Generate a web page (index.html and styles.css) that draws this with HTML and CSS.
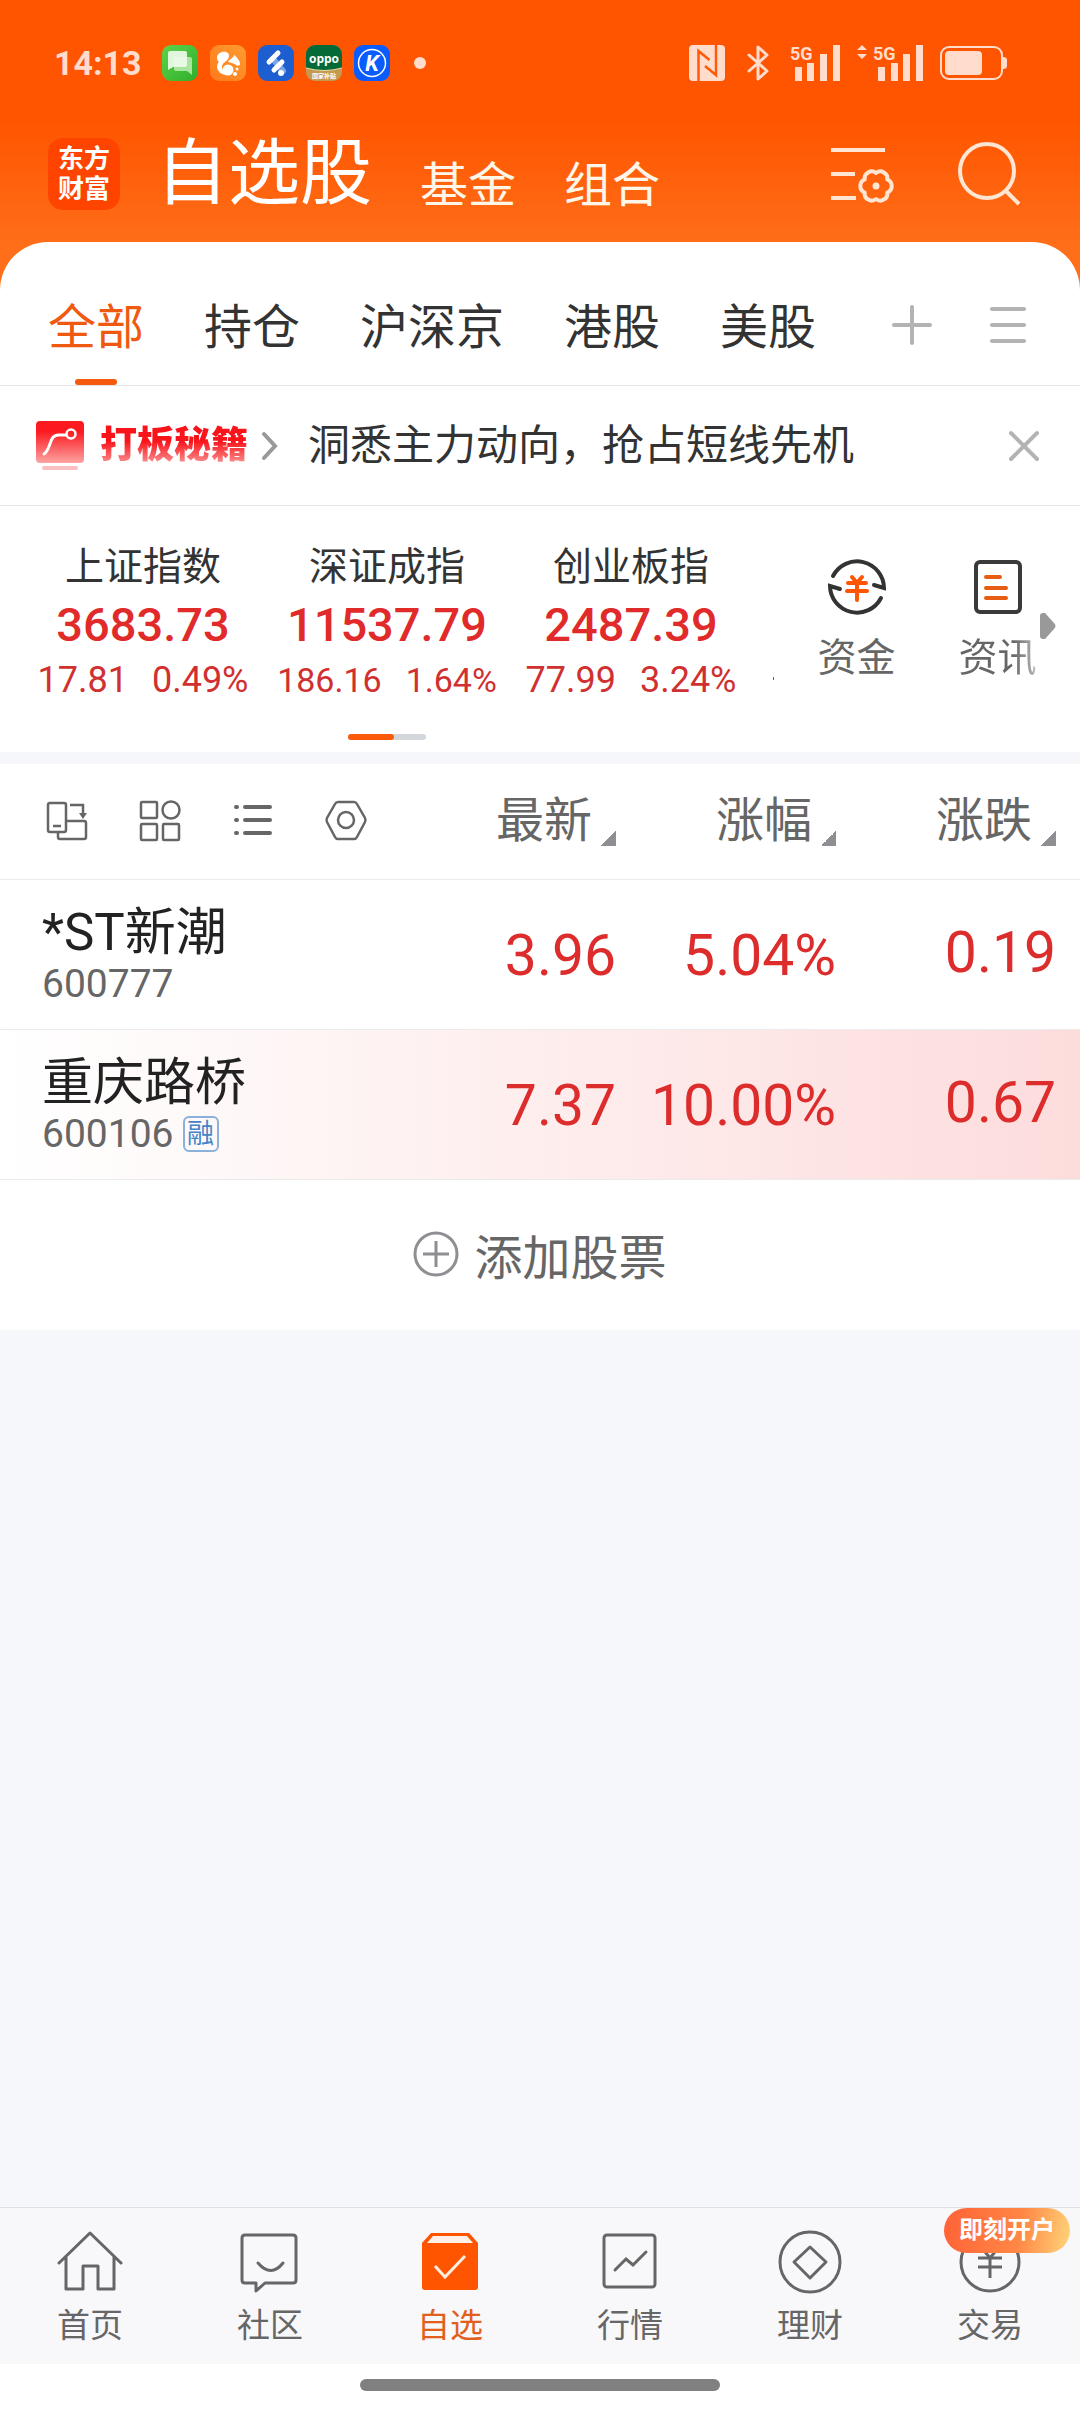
FILE: index.html
```html
<!DOCTYPE html>
<html lang="zh-CN">
<head>
    <meta charset="UTF-8">
    <meta name="viewport" content="width=device-width, initial-scale=1.0">
    <title>自选股</title>
    <link rel="stylesheet" href="styles.css">
</head>
<body>
    <header class="top">
        <div class="status">
            <span class="time">14:13</span>
            <div class="apps">
                <svg width="36" height="36" viewBox="0 0 36 36">
                    <defs><linearGradient id="g-msg" x1="0" y1="0" x2="1" y2="1"><stop offset="0" stop-color="#5fd34a"/><stop offset="1" stop-color="#2fae2c"/></linearGradient></defs>
                    <rect width="36" height="36" rx="9" fill="url(#g-msg)"/>
                    <path d="M12 12h16q2 0 2 2v16l-5-4H14q-2 0-2-2z" fill="#a9e59f"/>
                    <path d="M8 6h15q2 0 2 2v12q0 2-2 2H11l-5 3V8q0-2 2-2z" fill="#eefbea" opacity=".92"/>
                </svg>
                <svg width="36" height="36" viewBox="0 0 36 36">
                    <defs><linearGradient id="g-uc" x1="0" y1="1" x2="1" y2="0"><stop offset="0" stop-color="#ff7a1c"/><stop offset="1" stop-color="#ff9c30"/></linearGradient></defs>
                    <rect width="36" height="36" rx="9" fill="url(#g-uc)"/>
                    <path d="M7 13c0-5 5-7 9-6 3 1 4 4 2 7-2 3-6 4-6 8 0 3 2 6 5 8-6 0-10-4-10-9 0-2 1-3 2-4-1-1-2-2-2-4z" fill="#fff"/>
                    <path d="M18 17c1-3 5-3 6-7 3 2 6 6 6 9 0 2-3 2-4 1-2-2-5-2-8-3z" fill="#fff"/>
                    <circle cx="18" cy="25" r="5.500" fill="#fff"/>
                    <circle cx="27" cy="24" r="1.500" fill="#fff"/><circle cx="25" cy="29" r="2" fill="#fff"/>
                </svg>
                <svg width="36" height="36" viewBox="0 0 36 36">
                    <rect width="36" height="36" rx="9" fill="#1d5fd0"/>
                    <path d="M15 14l10 12" stroke="#7ea6e6" stroke-width="6" stroke-linecap="round"/>
                    <path d="M11 17L20 8M16 25l8-8" stroke="#fff" stroke-width="5" stroke-linecap="round"/>
                    <circle cx="23" cy="28" r="3" fill="#fff"/>
                </svg>
                <svg width="36" height="36" viewBox="0 0 36 36">
                    <path d="M0 9a9 9 0 0 1 9-9h18a9 9 0 0 1 9 9v18a9 9 0 0 1-9 9H9a9 9 0 0 1-9-9z" fill="#c49a52"/>
                    <path d="M0 23V9a9 9 0 0 1 9-9h18a9 9 0 0 1 9 9v14q-18 5-36 0z" fill="#046a38"/>
                    <path d="M0 23q18 5 36 0" fill="none" stroke="#f3dc9a"/>
                    <text class="oppo" x="18" y="18">oppo</text>
                    <text class="oppo-sub" x="18" y="33">国家补贴</text>
                </svg>
                <svg width="36" height="36" viewBox="0 0 36 36">
                    <rect width="36" height="36" rx="9" fill="#0a5cff"/>
                    <circle cx="18" cy="18" r="13.500" fill="none" stroke="#fff" stroke-width="1.500"/>
                    <text class="k-mark" x="18" y="26">K</text>
                </svg>
            </div>
            <span class="dot"></span>
            <div class="signals">
                <svg width="36" height="36" viewBox="0 0 36 36">
                    <rect width="36" height="36" rx="4" fill="#ffdccb"/>
                    <path d="M9.500 36V6l11 9M27 0v30l-11-9" fill="none" stroke="#ff5a08" stroke-width="2.500"/>
                </svg>
                <svg width="22" height="36" viewBox="0 0 22 36">
                    <path d="M2 10l18 16-9 8V2l9 8L2 26" fill="none" stroke="#ffdccb" stroke-width="3" stroke-linejoin="round" stroke-linecap="round"/>
                </svg>
                <svg width="52" height="36" viewBox="0 0 52 36">
                    <text class="net" x="1" y="15">5G</text>
                    <path d="M6 22h7v14H6zM18 18h7v18h-7zM31 9h7v27h-7zM44 0h7v36h-7z" fill="#ffdccb"/>
                </svg>
                <svg width="67" height="36" viewBox="0 0 67 36">
                    <path d="M0 5l5-5 5 5zM0 9l5 5 5-5z" fill="#ffdccb"/>
                    <text class="net" x="16" y="15">5G</text>
                    <path d="M21 22h7v14h-7zM34 18h7v18h-7zM46 9h7v27h-7zM59 0h7v36h-7z" fill="#ffdccb"/>
                </svg>
                <svg width="68" height="36" viewBox="0 0 68 36">
                    <rect x="1" y="2" width="61" height="32" rx="8" fill="none" stroke="#ffdccb" stroke-width="2"/>
                    <rect x="5" y="6" width="37" height="24" rx="4" fill="#ffdccb"/>
                    <path d="M63 12q4 0 4 3v6q0 3-4 3z" fill="#ffdccb"/>
                </svg>
            </div>
        </div>
        <nav class="title-bar">
            <div class="logo">东方<br>财富</div>
            <div class="sections">
                <a href="#" class="section current">自选股</a>
                <a href="#" class="section">基金</a>
                <a href="#" class="section">组合</a>
            </div>
            <button class="icon-btn" aria-label="设置">
                <svg width="64" height="64" viewBox="0 0 64 64" fill="none" stroke="#ffe6d3" stroke-width="4">
                    <path d="M0 8h54M0 32h24M0 56h25"/>
                    <g transform="translate(45 44)">
                        <path stroke-linejoin="round" d="M11.300 6.500A7 7 0 0 1 0 13A7 7 0 0 1-11.300 6.500A7 7 0 0 1-11.300-6.500A7 7 0 0 1 0-13A7 7 0 0 1 11.300-6.500A7 7 0 0 1 11.300 6.500z"/>
                        <circle r="3.500" fill="#ffe6d3" stroke="none"/>
                    </g>
                </svg>
            </button>
            <button class="icon-btn" aria-label="搜索">
                <svg width="64" height="64" viewBox="0 0 64 64" fill="none" stroke="#ffe6d3" stroke-width="4">
                    <circle cx="29" cy="29" r="27"/><path d="M47 48l14 14"/>
                </svg>
            </button>
        </nav>
    </header>

    <main class="sheet">
        <nav class="tabs">
            <a href="#" class="tab active">全部</a>
            <a href="#" class="tab">持仓</a>
            <a href="#" class="tab">沪深京</a>
            <a href="#" class="tab">港股</a>
            <a href="#" class="tab">美股</a>
            <div class="tab-tools">
                <button class="icon-btn" aria-label="添加分组">
                    <svg width="40" height="40" viewBox="0 0 40 40"><path d="M20 2v36M2 20h36" stroke="#b3b3b3" stroke-width="4" stroke-linecap="round"/></svg>
                </button>
                <button class="icon-btn" aria-label="管理分组">
                    <svg width="40" height="40" viewBox="0 0 40 40"><path d="M4 4h32M4 20h32M4 36h32" stroke="#b3b3b3" stroke-width="4" stroke-linecap="round"/></svg>
                </button>
            </div>
        </nav>

        <section class="notice">
            <svg width="48" height="52" viewBox="0 0 48 52">
                <defs><linearGradient id="g-red" x1="0" y1="0" x2="0" y2="1"><stop offset=".25" stop-color="#fb1a1f"/><stop offset="1" stop-color="#fda3a3"/></linearGradient></defs>
                <rect y="1" width="48" height="42" rx="4" fill="url(#g-red)"/>
                <path d="M8 34c8-5 4-20 16-19h6" fill="none" stroke="#fff" stroke-width="3" stroke-linecap="round"/>
                <circle cx="35" cy="14" r="4.500" fill="none" stroke="#fff" stroke-width="2.500"/>
                <rect x="6" y="46" width="36" height="4" rx="2" fill="#f9c0c2"/>
            </svg>
            <strong class="notice-tag">打板秘籍</strong>
            <svg class="chevron" width="16" height="28" viewBox="0 0 16 28"><path d="M2 2l11 12L2 26" fill="none" stroke="#999" stroke-width="4" stroke-linecap="round"/></svg>
            <a href="#" class="notice-text">洞悉主力动向，抢占短线先机</a>
            <button class="icon-btn" aria-label="关闭">
                <svg width="30" height="30" viewBox="0 0 30 30"><path d="M2 2l26 26M28 2L2 28" stroke="#b3b3b3" stroke-width="4" stroke-linecap="round"/></svg>
            </button>
        </section>

        <section class="market">
            <div class="indices">
                <div class="index-row">
                    <div class="index">
                        <span class="index-name">上证指数</span>
                        <span class="index-value">3683.73</span>
                        <span class="index-change"><span>17.81</span><span>0.49%</span></span>
                    </div>
                    <div class="index">
                        <span class="index-name">深证成指</span>
                        <span class="index-value">11537.79</span>
                        <span class="index-change long"><span>186.16</span><span>1.64%</span></span>
                    </div>
                    <div class="index">
                        <span class="index-name">创业板指</span>
                        <span class="index-value">2487.39</span>
                        <span class="index-change"><span>77.99</span><span>3.24%</span></span>
                    </div>
                    <div class="index-next"></div>
                </div>
                <div class="pager"><span></span></div>
            </div>
            <div class="shortcuts">
                <a href="#" class="shortcut">
                    <svg width="60" height="60" viewBox="0 0 60 60" fill="none" stroke="#333" stroke-width="4">
                        <path d="M6 19A27 27 0 0 1 57 31l-10-3" stroke-linecap="round"/>
                        <path d="M54 41A27 27 0 0 1 3 29l10 3" stroke-linecap="round"/>
                        <path d="M25 20l5 6 5-6M21 26h18M20 34h20M30 26v17" stroke="#ff5500" stroke-linecap="round"/>
                    </svg>
                    <span>资金</span>
                </a>
                <a href="#" class="shortcut">
                    <svg width="60" height="60" viewBox="0 0 60 60" fill="none" stroke-width="4">
                        <rect x="8" y="5" width="44" height="50" rx="4" stroke="#3a3a3a"/>
                        <path d="M18 20h14M18 31h20M18 41h20" stroke="#e85d14" stroke-linecap="round"/>
                    </svg>
                    <span class="fade">资讯</span>
                </a>
                <svg class="more" width="16" height="26" viewBox="0 0 16 26"><path d="M0 3q0-3 3-3h2l9 10q3 3 0 6L5 26H3q-3 0-3-3z" fill="#999"/></svg>
            </div>
        </section>

        <table class="stocks">
            <colgroup><col><col class="c-price"><col class="c-rate"><col class="c-diff"></colgroup>
            <thead>
                <tr>
                    <th>
                        <div class="views">
                            <button class="icon-btn" aria-label="横屏">
                                <svg width="44" height="44" viewBox="0 0 44 44" fill="none" stroke="#666" stroke-width="2.500">
                                    <rect x="3" y="4" width="18" height="29" rx="2"/><path d="M8 27h8"/>
                                    <path d="M25 6h13v9"/><path d="M34 14h8l-4 6z" fill="#666" stroke="none"/>
                                    <path d="M21 22h18q2 0 2 2v14q0 2-2 2H15q-2 0-2-2v-5"/>
                                </svg>
                            </button>
                            <button class="icon-btn" aria-label="宫格">
                                <svg width="44" height="44" viewBox="0 0 44 44" fill="none" stroke="#666" stroke-width="2.500">
                                    <rect x="3" y="3" width="16" height="16" rx="1"/><circle cx="33" cy="11" r="8.500"/>
                                    <rect x="3" y="25" width="16" height="16" rx="1"/><rect x="25" y="25" width="16" height="16" rx="1"/>
                                </svg>
                            </button>
                            <button class="icon-btn" aria-label="列表">
                                <svg width="44" height="44" viewBox="0 0 44 44" stroke="#666" stroke-width="4" stroke-linecap="round">
                                    <path d="M14 8h25M14 21h25M14 34h25"/><path d="M5 8h1M5 21h1M5 34h1"/>
                                </svg>
                            </button>
                            <button class="icon-btn" aria-label="列表设置">
                                <svg width="44" height="44" viewBox="0 0 44 44" fill="none" stroke="#666" stroke-width="2.500">
                                    <path d="M14 3h16q2 0 3 2l8 14q1 2 0 4l-8 15q-1 2-3 2H14q-2 0-3-2L3 23q-1-2 0-4l8-14q1-2 3-2z"/>
                                    <circle cx="22" cy="21" r="8"/>
                                </svg>
                            </button>
                        </div>
                    </th>
                    <th><button class="sort">最新</button></th>
                    <th><button class="sort">涨幅</button></th>
                    <th><button class="sort">涨跌</button></th>
                </tr>
            </thead>
            <tbody>
                <tr>
                    <td>
                        <div class="name">*ST新潮</div>
                        <div class="code">600777</div>
                    </td>
                    <td>3.96</td>
                    <td>5.04%</td>
                    <td class="diff">0.19</td>
                </tr>
                <tr class="hot">
                    <td>
                        <div class="name">重庆路桥</div>
                        <div class="code">600106<span class="margin-tag">融</span></div>
                    </td>
                    <td>7.37</td>
                    <td>10.00%</td>
                    <td class="diff">0.67</td>
                </tr>
            </tbody>
        </table>
        <button class="add">
            <svg width="46" height="46" viewBox="0 0 46 46" fill="none" stroke="#8e8e93" stroke-width="3"><circle cx="23" cy="23" r="21"/><path d="M23 10v26M10 23h26"/></svg>
            添加股票
        </button>
    </main>

    <nav class="bottom">
        <a href="#" class="item">
            <svg width="66" height="66" viewBox="0 0 66 66" fill="none" stroke="#666" stroke-width="3" stroke-linecap="round" stroke-linejoin="round">
                <path d="M2 34L33 4l31 30M9 28v32h17V37h15v23h16V28"/>
            </svg>
            <span>首页</span>
        </a>
        <a href="#" class="item">
            <svg width="66" height="66" viewBox="0 0 66 66" fill="none" stroke="#666" stroke-width="3" stroke-linejoin="round">
                <path d="M8 6h48q3 0 3 3v42q0 3-3 3H28l-9 8v-8H8q-3 0-3-3V9q0-3 3-3z"/>
                <path d="M21 34q13 15 25 0" stroke-linecap="round"/>
            </svg>
            <span>社区</span>
        </a>
        <a href="#" class="item on">
            <svg width="66" height="66" viewBox="0 0 66 66">
                <path d="M14 4h38l9 10v44q0 3-3 3H8q-3 0-3-3V14z" fill="#ff5500"/>
                <path d="M16 7h34l6 7H10z" fill="#fff1e8"/>
                <path d="M18 37l10 11 20-21" fill="none" stroke="#ffeddf" stroke-width="3"/>
            </svg>
            <span>自选</span>
        </a>
        <a href="#" class="item">
            <svg width="66" height="66" viewBox="0 0 66 66" fill="none" stroke="#666" stroke-width="3">
                <rect x="7" y="6" width="51" height="52" rx="3"/>
                <path d="M18 41l11-11 7 6 13-13" stroke-linecap="round"/>
            </svg>
            <span>行情</span>
        </a>
        <a href="#" class="item">
            <svg width="66" height="66" viewBox="0 0 66 66" fill="none" stroke="#666" stroke-width="3" stroke-linejoin="round">
                <circle cx="33" cy="33" r="30"/><path d="M33 18l16 15-16 16-16-16z"/>
            </svg>
            <span>理财</span>
        </a>
        <a href="#" class="item">
            <svg width="66" height="66" viewBox="0 0 66 66" fill="none" stroke="#666" stroke-width="3">
                <circle cx="33" cy="33" r="29"/><path d="M24 18l9 11 9-11M21 29h24M21 38h24M33 29v20"/>
            </svg>
            <span>交易</span>
            <em class="promo">即刻开户</em>
        </a>
    </nav>
    <div class="gesture"><span></span></div>
</body>
</html>
```
FILE: styles.css
```css
* { box-sizing: border-box; }
body {
    margin: 0;
    min-height: 100vh;
    display: flex;
    flex-direction: column;
    background: #f6f7fa;
    color: #333;
    font-family: Roboto, "Noto Sans CJK SC", sans-serif;
}
a { color: inherit; text-decoration: none; }
button {
    padding: 0;
    border: 0;
    background: none;
    color: inherit;
    font: inherit;
}
svg { display: block; flex: none; overflow: visible; }
.icon-btn { flex: none; }

/* header */
.top {
    background: linear-gradient(#ff5500 120px, #ff6f1a 250px);
    padding-bottom: 80px;
}
.status {
    display: flex;
    align-items: center;
    height: 36px;
    margin: 45px 72px 0 54px;
}
.time { width: 108px; font-size: 34px; line-height: 36px; font-weight: 700; color: #ffdccb; }
.apps { display: flex; gap: 12px; }
.oppo { font: 700 12px "Open Sans", sans-serif; fill: #fff; text-anchor: middle; }
.oppo-sub { font: 700 6px "Noto Sans CJK SC", sans-serif; fill: #fff; text-anchor: middle; }
.k-mark { font: italic 700 22px Roboto, sans-serif; fill: #fff; text-anchor: middle; }
.net { font: 700 18px Roboto, sans-serif; fill: #ffdccb; }
.dot { width: 12px; height: 12px; margin-left: 24px; border-radius: 50%; background: #ffdccb; }
.signals { display: flex; gap: 16px; margin-left: auto; }
.signals svg:nth-child(2) { margin: 0 4px 0 6px; }

.title-bar {
    display: flex;
    align-items: center;
    gap: 63px;
    padding: 57px 58px 0 48px;
}
.logo {
    width: 72px;
    height: 72px;
    margin-right: -27px;
    padding-top: 6px;
    border-radius: 15px;
    background: #ff4400;
    color: #fff;
    font-size: 26px;
    line-height: 30px;
    font-weight: 700;
    text-align: center;
}
.sections { display: flex; align-items: flex-end; gap: 48px; flex: 1; }
.section { font-size: 48px; line-height: 48px; color: #fff6ea; }
.section.current { font-size: 72px; line-height: 72px; color: #fff; }

/* white sheet */
.sheet {
    margin-top: -48px;
    border-radius: 48px 48px 0 0;
    background: #fff;
}
.tabs {
    display: flex;
    align-items: center;
    gap: 60px;
    height: 144px;
    padding: 0 52px 0 48px;
    border-bottom: 1px solid #e3e3e3;
}
.tab {
    position: relative;
    padding: 14px 0;
    height: 143px;
    font-size: 48px;
    line-height: 144px;
    color: #333;
}
.tab.active { color: #f05a10; }
.tab.active::after {
    content: "";
    position: absolute;
    left: 27px;
    bottom: 0;
    width: 42px;
    height: 6px;
    border-radius: 3px;
    background: #f55a0c;
}
.tab-tools { display: flex; gap: 56px; margin-left: auto; padding-top: 22px; }

.notice {
    display: flex;
    align-items: center;
    height: 120px;
    padding: 0 41px 0 36px;
    border-bottom: 1px solid #e3e3e3;
}
.notice-tag {
    margin-left: 16px;
    font-size: 37px;
    line-height: 48px;
    font-weight: 900;
    background: linear-gradient(#f9141b 40%, #fc9a9a 90%);
    -webkit-background-clip: text;
    background-clip: text;
    color: transparent;
}
.chevron { margin: 0 30px 0 14px; }
.notice-text { flex: 1; font-size: 42px; line-height: 48px; }

.market {
    display: flex;
    padding: 37px 12px 12px 21px;
    border-bottom: 12px solid #f6f7fa;
}
.indices { flex: 1; }
.index-row { display: flex; }
.index { flex: 1; display: flex; flex-direction: column; align-items: center; gap: 7px; }
.index-name { font-size: 39px; line-height: 48px; }
.index-value { font-size: 47px; line-height: 54px; font-weight: 500; color: #e12a2a; }
.index-change { display: flex; gap: 24px; font-size: 36px; line-height: 42px; color: #d03030; }
.index-change.long { font-size: 34px; }
.index-next { width: 33px; }
.index-next::after {
    content: "";
    display: block;
    width: 1px;
    height: 3px;
    margin: 134px 0 0 20px;
    background: #d03030;
}
.pager {
    width: 78px;
    height: 6px;
    margin: 33px auto 0;
    border-radius: 3px;
    background: #d3d6da;
}
.indices .pager { position: relative; right: 17px; }
.pager span { display: block; width: 60%; height: 6px; border-radius: 3px; background: #fa5a0a; }
.shortcuts { position: relative; display: flex; padding-top: 14px; }
.shortcut {
    width: 141px;
    display: flex;
    flex-direction: column;
    align-items: center;
    gap: 17px;
    font-size: 39px;
    line-height: 48px;
    color: #666;
}
.fade {
    background: linear-gradient(90deg, #666 70%, #bbb);
    -webkit-background-clip: text;
    background-clip: text;
    color: transparent;
}
.more { position: absolute; right: 12px; top: 70px; }

/* stock table */
.stocks {
    width: 100%;
    table-layout: fixed;
    border-collapse: collapse;
}
.c-price, .c-rate { width: 220px; }
.c-diff { width: 244px; }
.stocks th { height: 115px; padding: 0; font-weight: 400; text-align: right; border-bottom: 1px solid #ebebeb; }
.stocks th:last-child, .stocks td:last-child { padding-right: 24px; }
.views { display: flex; gap: 49px; padding-left: 45px; }
.sort { font-size: 48px; line-height: 60px; color: #666; white-space: nowrap; }
.sort::after {
    content: "";
    display: inline-block;
    width: 15px;
    height: 15px;
    margin: 0 0 -9px 9px;
    background: linear-gradient(135deg, transparent 50%, #8e8e93 50%);
}
.stocks td {
    height: 150px;
    padding: 4px 0 0;
    border-bottom: 1px solid #ebebeb;
    font-size: 57px;
    line-height: 66px;
    color: #dc2c2c;
    text-align: right;
    white-space: nowrap;
}
.stocks td:first-child { padding: 0 0 0 42px; text-align: left; }
.stocks td.diff { padding-top: 0; padding-bottom: 2px; }
.name { font-size: 51px; line-height: 60px; color: #222; }
.code { display: flex; align-items: center; gap: 9px; font-size: 39px; line-height: 42px; color: #666; }
.margin-tag {
    width: 36px;
    height: 36px;
    border: 2px solid #8ab0dc;
    border-radius: 6px;
    font-size: 27px;
    line-height: 32px;
    text-align: center;
    color: #4584c8;
}
.hot { background: linear-gradient(90deg, #fff, #fddcdc); }
.add {
    display: flex;
    align-items: center;
    justify-content: center;
    gap: 15px;
    width: 100%;
    height: 150px;
    padding-bottom: 2px;
    font-size: 48px;
    color: #666;
}

/* bottom bar */
.bottom {
    display: flex;
    margin-top: auto;
    border-top: 1px solid #e0e0e2;
    background: #f8f7fa;
}
.item {
    position: relative;
    flex: 1;
    display: flex;
    flex-direction: column;
    align-items: center;
    gap: 10px;
    padding: 21px 0 17px;
    font-size: 33px;
    line-height: 42px;
    color: #666;
}
.item.on { color: #e0601c; }
.promo {
    position: absolute;
    top: 0;
    right: 10px;
    width: 126px;
    height: 45px;
    border-radius: 23px;
    background: linear-gradient(100deg, #ff6236, #ff8746 60%, #ffd679);
    color: #fff;
    font-size: 24px;
    line-height: 45px;
    font-style: normal;
    font-weight: 700;
    text-align: center;
}
.gesture {
    height: 48px;
    padding-top: 15px;
    background: #fff;
}
.gesture span {
    display: block;
    width: 33.3333%;
    height: 12px;
    margin: 0 auto;
    border-radius: 6px;
    background: #808080;
}
```
